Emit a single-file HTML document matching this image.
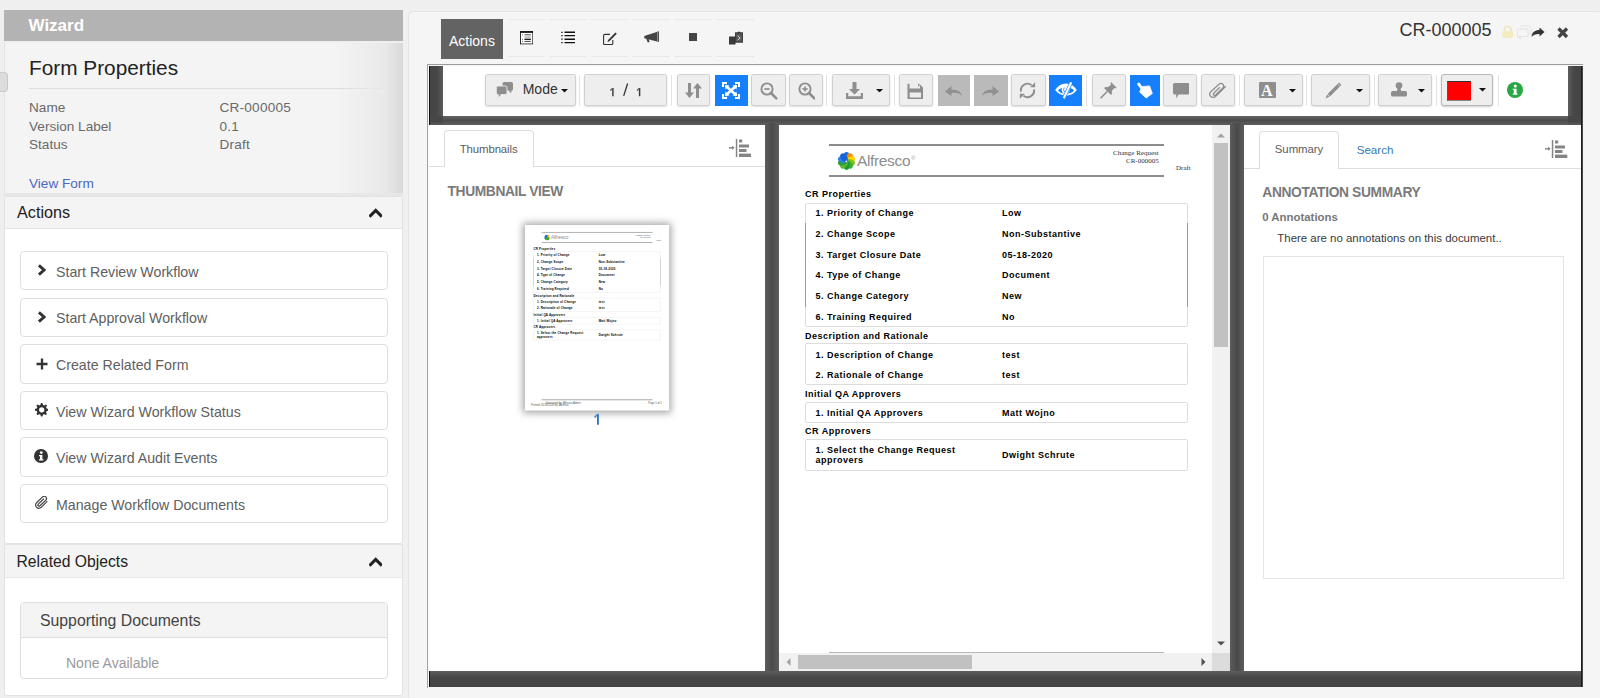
<!DOCTYPE html><html><head><meta charset="utf-8"><style>
*{margin:0;padding:0;box-sizing:border-box}
html,body{width:1600px;height:698px;overflow:hidden;background:#efefef;font-family:"Liberation Sans",sans-serif}
.r{position:absolute;display:block}
.t{position:absolute;line-height:1;white-space:nowrap}
</style></head><body><div class="r" style="left:4.00px;top:10.00px;width:399.00px;height:31.00px;background:#b3b3b3;"></div>
<div class="t" style="left:28.50px;top:17.01px;font-size:17.00px;color:#fff;font-weight:bold;">Wizard</div>
<div class="r" style="left:4.00px;top:43.00px;width:399.00px;height:149.80px;background:linear-gradient(to right,#f4f4f4 0,#f4f4f4 330px,#e9e9e9 380px,#d8d8d8 399px);border-left:1px solid #e3e3e3;"></div>
<div class="r" style="left:4.00px;top:192.80px;width:399.00px;height:3.40px;background:#e7e7e7;"></div>
<div class="r" style="left:0.00px;top:72.00px;width:8.00px;height:20.00px;background:#dcdcdc;border:1px solid #c8c8c8;border-left:none;border-radius:0 4px 4px 0;"></div>
<div class="t" style="left:29.00px;top:58.19px;font-size:20.80px;color:#222;">Form Properties</div>
<div class="r" style="left:29.00px;top:88.20px;width:361.00px;height:1.00px;background:linear-gradient(to right,#dedede 0,#dedede 320px,rgba(222,222,222,0) 361px);"></div>
<div class="t" style="left:29.00px;top:101.19px;font-size:13.60px;color:#6a6a6a;">Name</div>
<div class="t" style="left:219.40px;top:101.19px;font-size:13.60px;color:#6a6a6a;letter-spacing:0.25px;">CR-000005</div>
<div class="t" style="left:29.00px;top:120.09px;font-size:13.60px;color:#6a6a6a;">Version Label</div>
<div class="t" style="left:219.40px;top:120.09px;font-size:13.60px;color:#6a6a6a;letter-spacing:0.25px;">0.1</div>
<div class="t" style="left:29.00px;top:138.49px;font-size:13.60px;color:#6a6a6a;">Status</div>
<div class="t" style="left:219.40px;top:138.49px;font-size:13.60px;color:#6a6a6a;letter-spacing:0.25px;">Draft</div>
<div class="t" style="left:29.00px;top:176.69px;font-size:13.60px;color:#4b68c0;">View Form</div>
<div class="r" style="left:4.00px;top:196.00px;width:399.00px;height:347.60px;background:#fff;border:1px solid #e2e2e2;border-radius:3px;"></div>
<div class="r" style="left:5.00px;top:197.00px;width:397.00px;height:31.50px;background:#f4f4f4;border-bottom:1px solid #e6e6e6;border-radius:3px 3px 0 0;"></div>
<div class="t" style="left:17.00px;top:203.59px;font-size:16.20px;color:#222;">Actions</div>
<svg class="r" style="left:368.60px;top:206.60px;" width="13.40" height="11.00" viewBox="0 0 13.4 11"><path d="M1.6 8.6 L6.7 3.5 L11.8 8.6" fill="none" stroke="#222" stroke-width="3.1" stroke-linecap="square"/></svg>
<div class="r" style="left:20.00px;top:251.00px;width:367.50px;height:39.40px;border:1px solid #dedede;border-radius:4px;background:#fff;"></div>
<div class="t" style="left:56.00px;top:264.78px;font-size:14.20px;color:#606060;">Start Review Workflow</div>
<div class="r" style="left:20.00px;top:297.60px;width:367.50px;height:39.40px;border:1px solid #dedede;border-radius:4px;background:#fff;"></div>
<div class="t" style="left:56.00px;top:311.38px;font-size:14.20px;color:#606060;">Start Approval Workflow</div>
<div class="r" style="left:20.00px;top:344.20px;width:367.50px;height:39.40px;border:1px solid #dedede;border-radius:4px;background:#fff;"></div>
<div class="t" style="left:56.00px;top:357.98px;font-size:14.20px;color:#606060;">Create Related Form</div>
<div class="r" style="left:20.00px;top:390.80px;width:367.50px;height:39.40px;border:1px solid #dedede;border-radius:4px;background:#fff;"></div>
<div class="t" style="left:56.00px;top:404.58px;font-size:14.20px;color:#606060;">View Wizard Workflow Status</div>
<div class="r" style="left:20.00px;top:437.40px;width:367.50px;height:39.40px;border:1px solid #dedede;border-radius:4px;background:#fff;"></div>
<div class="t" style="left:56.00px;top:451.18px;font-size:14.20px;color:#606060;">View Wizard Audit Events</div>
<div class="r" style="left:20.00px;top:484.00px;width:367.50px;height:39.40px;border:1px solid #dedede;border-radius:4px;background:#fff;"></div>
<div class="t" style="left:56.00px;top:497.78px;font-size:14.20px;color:#606060;">Manage Workflow Documents</div>
<svg class="r" style="left:37.10px;top:264.20px;" width="9.00" height="12.00" viewBox="0 0 9 12"><path d="M1.9 1.4 L7.1 6 L1.9 10.6" fill="none" stroke="#333" stroke-width="2.9" stroke-linejoin="miter"/></svg>
<svg class="r" style="left:37.10px;top:310.80px;" width="9.00" height="12.00" viewBox="0 0 9 12"><path d="M1.9 1.4 L7.1 6 L1.9 10.6" fill="none" stroke="#333" stroke-width="2.9" stroke-linejoin="miter"/></svg>
<svg class="r" style="left:35.50px;top:357.80px;" width="12.00" height="12.00" viewBox="0 0 12 12"><path d="M6 0.5 V11.5 M0.5 6 H11.5" stroke="#333" stroke-width="2.3"/></svg>
<svg class="r" style="left:34.70px;top:403.00px;" width="13.40" height="13.60" viewBox="0 0 13.4 13.6"><path fill-rule="evenodd" fill="#333" d="M6.03,0.03 L7.37,0.03 L8.15,2.02 L9.06,2.39 L11.01,1.54 L11.96,2.49 L11.11,4.44 L11.48,5.35 L13.47,6.13 L13.47,7.47 L11.48,8.25 L11.11,9.16 L11.96,11.11 L11.01,12.06 L9.06,11.21 L8.15,11.58 L7.37,13.57 L6.03,13.57 L5.25,11.58 L4.34,11.21 L2.39,12.06 L1.44,11.11 L2.29,9.16 L1.92,8.25 L-0.07,7.47 L-0.07,6.13 L1.92,5.35 L2.29,4.44 L1.44,2.49 L2.39,1.54 L4.34,2.39 L5.25,2.02 Z M4.10,6.80 a2.60,2.60 0 1,0 5.20,0 a2.60,2.60 0 1,0 -5.20,0 Z"/></svg>
<svg class="r" style="left:34.30px;top:448.60px;" width="14.00" height="14.00" viewBox="0 0 14 14"><circle cx="7" cy="7" r="7" fill="#333"/><circle cx="7.3" cy="3.6" r="1.4" fill="#fff"/><path d="M5 6 H8.4 V10.3 H9.4 V11.5 H5 V10.3 H6 V7.2 H5 Z" fill="#fff"/></svg>
<svg class="r" style="left:34.50px;top:496.20px;" width="14.00" height="13.00" viewBox="0 0 14 13"><path d="M12.3 5.2 L6.2 11.3 C4.9 12.6 2.8 12.6 1.6 11.3 C0.3 10 0.3 7.9 1.6 6.7 L7.6 0.9 C8.5 0.0 9.9 0.0 10.8 0.9 C11.7 1.8 11.7 3.2 10.8 4.1 L5 9.8 C4.5 10.3 3.8 10.3 3.3 9.8 C2.8 9.3 2.8 8.6 3.3 8.1 L8.8 2.7" fill="none" stroke="#444" stroke-width="1.2"/></svg>
<div class="r" style="left:4.00px;top:543.80px;width:399.00px;height:152.70px;background:#fff;border:1px solid #e2e2e2;border-radius:1px 1px 3px 3px;"></div>
<div class="r" style="left:5.00px;top:544.80px;width:397.00px;height:33.70px;background:#f4f4f4;border-bottom:1px solid #e6e6e6;"></div>
<div class="t" style="left:16.40px;top:554.01px;font-size:15.70px;color:#222;">Related Objects</div>
<svg class="r" style="left:368.60px;top:555.60px;" width="13.40" height="11.00" viewBox="0 0 13.4 11"><path d="M1.6 8.6 L6.7 3.5 L11.8 8.6" fill="none" stroke="#222" stroke-width="3.1" stroke-linecap="square"/></svg>
<div class="r" style="left:20.00px;top:602.20px;width:367.50px;height:76.80px;border:1px solid #dedede;border-radius:4px;background:#fff;"></div>
<div class="r" style="left:21.00px;top:603.20px;width:365.50px;height:34.80px;background:#f4f4f4;border-bottom:1px solid #dedede;border-radius:3px 3px 0 0;"></div>
<div class="t" style="left:40.00px;top:613.43px;font-size:15.80px;color:#444;">Supporting Documents</div>
<div class="t" style="left:66.00px;top:655.85px;font-size:14.00px;color:#9a9a9a;">None Available</div>
<div class="r" style="left:403.00px;top:10.00px;width:5.00px;height:688.00px;background:#f0f0f0;"></div>
<div class="r" style="left:408.00px;top:10.50px;width:1196.00px;height:691.50px;background:#f5f5f5;border:1px solid #e4e4e4;border-radius:5px;"></div>
<div class="r" style="left:441.00px;top:19.00px;width:62.00px;height:39.50px;background:#636363;"></div>
<div class="t" style="left:449.00px;top:33.75px;font-size:14.00px;color:#fff;">Actions</div>
<div class="r" style="left:507.00px;top:19.00px;width:38.00px;height:37.50px;border-top:1px solid #e9e9e9;border-bottom:1px solid #e9e9e9;"></div>
<div class="r" style="left:548.80px;top:19.00px;width:38.00px;height:37.50px;border-top:1px solid #e9e9e9;border-bottom:1px solid #e9e9e9;"></div>
<div class="r" style="left:590.60px;top:19.00px;width:38.00px;height:37.50px;border-top:1px solid #e9e9e9;border-bottom:1px solid #e9e9e9;"></div>
<div class="r" style="left:632.40px;top:19.00px;width:38.00px;height:37.50px;border-top:1px solid #e9e9e9;border-bottom:1px solid #e9e9e9;"></div>
<div class="r" style="left:674.20px;top:19.00px;width:38.00px;height:37.50px;border-top:1px solid #e9e9e9;border-bottom:1px solid #e9e9e9;"></div>
<div class="r" style="left:716.00px;top:19.00px;width:38.00px;height:37.50px;border-top:1px solid #e9e9e9;border-bottom:1px solid #e9e9e9;"></div>
<svg class="r" style="left:519.70px;top:31.00px;" width="13.30" height="14.00" viewBox="0 0 13.3 14"><rect x="0.5" y="0.6" width="12.3" height="12.4" fill="#fff" stroke="#2a2a2a" stroke-width="1"/><rect x="0" y="0" width="13.3" height="1.9" fill="#1a1a1a"/><path d="M2.2 3.8 H3 M4.5 3.8 H10.8 M2.2 8.3 H3 M4.5 8.3 H10.8 M2.2 10.4 H3 M4.5 10.4 H10.8" stroke="#333" stroke-width="0.9"/><rect x="4.5" y="5" width="6.3" height="2.2" fill="#c8c8c8"/><path d="M4.5 8.3 H10.8" stroke="#111" stroke-width="1.1"/><rect x="0.5" y="13" width="12.3" height="0.8" fill="#bbb"/></svg>
<svg class="r" style="left:560.80px;top:31.00px;" width="14.50" height="12.50" viewBox="0 0 14.5 12.5"><path d="M0.2 1.3 H1.7 M0.2 4.6 H1.7 M0.2 8.2 H1.7 M0.2 11.6 H1.7" stroke="#222" stroke-width="1.3"/><path d="M3.5 1.3 H14.3 M3.5 4.6 H14.3 M3.5 8.2 H14.3 M3.5 11.6 H14.3" stroke="#111" stroke-width="1.4"/></svg>
<svg class="r" style="left:602.80px;top:31.60px;" width="14.00" height="13.00" viewBox="0 0 14 13"><path d="M7 2.4 H1.8 A1.2 1.2 0 0 0 0.6 3.6 V11.4 A1.2 1.2 0 0 0 1.8 12.6 H8.6 A1.2 1.2 0 0 0 9.8 11.4 V8" fill="none" stroke="#333" stroke-width="1.1"/><path d="M12.4 0.4 L13.8 1.8 L6.4 9.2 L4.4 10 L5.1 8 Z" fill="#333"/></svg>
<svg class="r" style="left:644.00px;top:31.20px;" width="15.00" height="12.00" viewBox="0 0 15 12"><path d="M0.3 5 L15 0.2 V11 L0.3 7.2 Z" fill="#444"/><path d="M2 6.8 L3.6 11.3 L5.6 11.3 L4.6 7.4 Z" fill="#444"/><path d="M13.6 0.6 V10.6" stroke="#999" stroke-width="1"/></svg>
<div class="r" style="left:689.40px;top:33.20px;width:7.90px;height:8.20px;background:#444;"></div>
<svg class="r" style="left:728.70px;top:30.60px;" width="14.00" height="14.00" viewBox="0 0 14 14"><rect x="0" y="5.5" width="6.5" height="8" fill="#3a3a3a"/><rect x="6.4" y="1.8" width="7.2" height="9.4" fill="#555" stroke="#333" stroke-width="0.9"/><path d="M8.2 2 L10 0.2 L11.8 2 Z" fill="#333"/><path d="M8.6 4.8 L11.2 7 L8.6 9.2" fill="none" stroke="#ddd" stroke-width="1"/></svg>
<div class="t" style="left:1399.40px;top:21.16px;font-size:18.00px;color:#333;">CR-000005</div>
<svg class="r" style="left:1502.00px;top:25.00px;" width="11.50" height="13.50" viewBox="0 0 11.5 13.5"><path d="M2.5 6 V4 A3.3 3.3 0 0 1 9 4 V6" fill="none" stroke="#ede6b8" stroke-width="1.6"/><rect x="0.5" y="6" width="10.5" height="7" rx="1" fill="#f3ecc0"/></svg>
<svg class="r" style="left:1516.50px;top:25.00px;" width="15.00" height="14.00" viewBox="0 0 15 14"><path d="M3 1 H12 A2 2 0 0 1 14 3 V7 A2 2 0 0 1 12 9 H11" fill="none" stroke="#e6e6e6" stroke-width="1.1"/><path d="M1.5 4 H9.5 A1.5 1.5 0 0 1 11 5.5 V10 A1.5 1.5 0 0 1 9.5 11.5 H4.5 L2.8 13.5 V11.5 H1.5 A1.5 1.5 0 0 1 0 10 V5.5 A1.5 1.5 0 0 1 1.5 4 Z" fill="none" stroke="#e2e2e2" stroke-width="1.1"/></svg>
<svg class="r" style="left:1531.00px;top:27.00px;" width="14.00" height="10.50" viewBox="0 0 14 10.5"><path d="M13.5 5 L8.5 0.5 V3 C4 3 1 5 0.5 10 C2.2 7.5 4.5 6.8 8.5 6.9 V9.5 Z" fill="#333"/></svg>
<svg class="r" style="left:1557.00px;top:27.00px;" width="11.50" height="11.50" viewBox="0 0 11.5 11.5"><path d="M1.5 1.5 L10 10 M10 1.5 L1.5 10" stroke="#444" stroke-width="3.3" stroke-linecap="butt"/></svg>
<div class="r" style="left:429.00px;top:65.50px;width:1153.50px;height:621.50px;background:#474747;"></div>
<div class="r" style="left:427.00px;top:64.20px;width:1155.50px;height:1.30px;background:#9c9c9c;"></div>
<div class="r" style="left:427.00px;top:64.20px;width:1.00px;height:623.80px;background:#a4a4a4;"></div>
<div class="r" style="left:428.00px;top:65.50px;width:1.00px;height:622.50px;background:#f8f8f8;"></div>
<div class="r" style="left:429.00px;top:65.50px;width:1.00px;height:621.50px;background:#111;"></div>
<div class="r" style="left:1581.30px;top:65.50px;width:1.20px;height:621.50px;background:#1c1c1c;"></div>
<div class="r" style="left:430.00px;top:65.50px;width:1151.20px;height:1.50px;background:linear-gradient(#333,#474747);"></div>
<div class="r" style="left:430.00px;top:65.50px;width:13.00px;height:50.50px;background:linear-gradient(to right,#444 0,#474747 55%,#5d5d5d 100%);"></div>
<div class="r" style="left:1568.00px;top:65.50px;width:13.30px;height:50.50px;background:linear-gradient(to right,#5d5d5d 0,#474747 45%,#444 100%);"></div>
<div class="r" style="left:443.00px;top:116.00px;width:1125.00px;height:9.00px;background:linear-gradient(to bottom,#646464 0,#4c4c4c 50%,#5f5f5f 100%);"></div>
<div class="r" style="left:430.00px;top:116.00px;width:13.00px;height:9.00px;background:linear-gradient(to bottom,#474747 0,#474747 60%,#5a5a5a 100%);"></div>
<div class="r" style="left:1568.00px;top:116.00px;width:13.30px;height:9.00px;background:linear-gradient(to bottom,#474747 0,#474747 60%,#5a5a5a 100%);"></div>
<div class="r" style="left:765.00px;top:123.00px;width:14.00px;height:548.00px;background:linear-gradient(to right,#5c5c5c 0,#4a4a4a 50%,#5c5c5c 100%);"></div>
<div class="r" style="left:1230.00px;top:123.00px;width:14.00px;height:548.00px;background:linear-gradient(to right,#5c5c5c 0,#4a4a4a 50%,#5c5c5c 100%);"></div>
<div class="r" style="left:430.00px;top:671.00px;width:1151.30px;height:16.00px;background:linear-gradient(to bottom,#5e5e5e 0,#474747 40%,#444 100%);"></div>
<div class="r" style="left:443.00px;top:65.60px;width:1125.00px;height:50.40px;background:#fff;"></div>
<div class="r" style="left:428.50px;top:125.00px;width:336.50px;height:546.00px;background:#fff;"></div>
<div class="r" style="left:779.00px;top:125.00px;width:451.00px;height:546.00px;background:#fff;"></div>
<div class="r" style="left:1244.00px;top:125.00px;width:337.00px;height:546.00px;background:#fff;"></div>
<div class="r" style="left:428.00px;top:64.20px;width:15.00px;height:1.30px;background:#9c9c9c;"></div>
<div class="r" style="left:484.50px;top:74.20px;width:91.00px;height:32.10px;background:#eeeeee;border:1px solid #d0d0d0;border-radius:2.5px;box-shadow:0 1px 2px rgba(0,0,0,0.13);"></div>
<svg class="r" style="left:496.00px;top:81.00px;" width="17.50" height="16.50" viewBox="0 0 17.5 16.5"><rect x="6.5" y="1" width="10.5" height="8.5" rx="1.6" fill="#8e8e8e"/><path d="M12.3 9.3 H15.6 L15.1 12.3 Z" fill="#8e8e8e"/><rect x="0.3" y="5" width="10.7" height="8.5" rx="1.6" fill="#8e8e8e" stroke="#eeeeee" stroke-width="0.9"/><path d="M2.4 13.3 H5.2 L2.9 16 Z" fill="#8e8e8e"/></svg>
<div class="t" style="left:522.70px;top:82.05px;font-size:14.00px;color:#333;">Mode</div>
<svg class="r" style="left:560.50px;top:89.00px;" width="7.00" height="3.60" viewBox="0 0 7 3.6"><path d="M0 0 H7 L3.5 3.5 Z" fill="#111"/></svg>
<div class="r" style="left:579.00px;top:75.00px;width:1.00px;height:30.50px;background:#e3e3e3;"></div>
<div class="r" style="left:584.00px;top:74.20px;width:83.00px;height:32.10px;background:#eeeeee;border:1px solid #d0d0d0;border-radius:2.5px;box-shadow:0 1px 2px rgba(0,0,0,0.13);"></div>
<svg class="r" style="left:600.00px;top:78.00px;" width="50.00" height="24.00" viewBox="0 0 50 24"><path d="M12.9 9.9 V18.3 M39.6 9.9 V18.3" fill="none" stroke="#3a3a3a" stroke-width="1.45"/><path d="M10.3 12.5 L12.8 10.1 M37 12.5 L39.5 10.1" fill="none" stroke="#555" stroke-width="1.1"/><path d="M27.6 5.5 L23.7 17.9" stroke="#333" stroke-width="1.3"/></svg>
<div class="r" style="left:671.00px;top:75.00px;width:1.00px;height:30.50px;background:#e3e3e3;"></div>
<div class="r" style="left:676.50px;top:74.20px;width:33.50px;height:32.10px;background:#eeeeee;border:1px solid #d0d0d0;border-radius:2.5px;box-shadow:0 1px 2px rgba(0,0,0,0.13);"></div>
<svg class="r" style="left:685.00px;top:83.00px;" width="17.00" height="15.00" viewBox="0 0 17 15"><path d="M3 0 H6 V9.5 H9 L4.5 15 L0 9.5 H3 Z" fill="#8e8e8e"/><path d="M11 15 H14 V5.5 H17 L12.5 0 L8 5.5 H11 Z" fill="#8e8e8e"/></svg>
<div class="r" style="left:715.00px;top:75.00px;width:32.50px;height:30.50px;background:#167ffc;"></div>
<svg class="r" style="left:722.00px;top:81.50px;" width="18.00" height="17.00" viewBox="0 0 18 17"><g fill="none" stroke="#fff" stroke-width="2"><path d="M1 5 V1 H5 M13 1 H17 V5 M17 12 V16 H13 M5 16 H1 V12"/></g><path d="M3.5 3.5 L14.5 13.5 M14.5 3.5 L3.5 13.5" stroke="#fff" stroke-width="2.4"/><path d="M3 3 L7.5 3.6 L3.6 7.5 Z M15 3 L10.5 3.6 L14.4 7.5 Z M15 14 L10.5 13.4 L14.4 9.5 Z M3 14 L7.5 13.4 L3.6 9.5 Z" fill="#fff"/></svg>
<div class="r" style="left:751.00px;top:74.20px;width:34.50px;height:32.10px;background:#eeeeee;border:1px solid #d0d0d0;border-radius:2.5px;box-shadow:0 1px 2px rgba(0,0,0,0.13);"></div>
<svg class="r" style="left:760.00px;top:82.00px;" width="17.50" height="17.50" viewBox="0 0 17.5 17.5"><circle cx="7" cy="7" r="5.6" fill="none" stroke="#8e8e8e" stroke-width="1.9"/><path d="M11 11 L16.3 16.3" stroke="#8e8e8e" stroke-width="2.6" stroke-linecap="round"/><path d="M4.4 7 H9.6" stroke="#8e8e8e" stroke-width="1.7"/></svg>
<div class="r" style="left:788.50px;top:74.20px;width:34.50px;height:32.10px;background:#eeeeee;border:1px solid #d0d0d0;border-radius:2.5px;box-shadow:0 1px 2px rgba(0,0,0,0.13);"></div>
<svg class="r" style="left:797.50px;top:82.00px;" width="17.50" height="17.50" viewBox="0 0 17.5 17.5"><circle cx="7" cy="7" r="5.6" fill="none" stroke="#8e8e8e" stroke-width="1.9"/><path d="M11 11 L16.3 16.3" stroke="#8e8e8e" stroke-width="2.6" stroke-linecap="round"/><path d="M4.4 7 H9.6" stroke="#8e8e8e" stroke-width="1.7"/><path d="M7 4.4 V9.6" stroke="#8e8e8e" stroke-width="1.7"/></svg>
<div class="r" style="left:826.00px;top:75.00px;width:1.00px;height:30.50px;background:#e3e3e3;"></div>
<div class="r" style="left:831.50px;top:74.20px;width:58.50px;height:32.10px;background:#eeeeee;border:1px solid #d0d0d0;border-radius:2.5px;box-shadow:0 1px 2px rgba(0,0,0,0.13);"></div>
<svg class="r" style="left:845.50px;top:82.00px;" width="17.00" height="17.00" viewBox="0 0 17 17"><path d="M6.5 0 H10.5 V7 H14 L8.5 12.5 L3 7 H6.5 Z" fill="#8e8e8e"/><path d="M0 11 H2.2 V14.2 H14.8 V11 H17 V17 H0 Z" fill="#8e8e8e"/></svg>
<svg class="r" style="left:876.00px;top:88.50px;" width="7.00" height="3.60" viewBox="0 0 7 3.6"><path d="M0 0 H7 L3.5 3.5 Z" fill="#111"/></svg>
<div class="r" style="left:894.00px;top:75.00px;width:1.00px;height:30.50px;background:#e3e3e3;"></div>
<div class="r" style="left:899.00px;top:74.20px;width:34.00px;height:32.10px;background:#eeeeee;border:1px solid #d0d0d0;border-radius:2.5px;box-shadow:0 1px 2px rgba(0,0,0,0.13);"></div>
<svg class="r" style="left:907.00px;top:82.50px;" width="16.50" height="16.50" viewBox="0 0 16.5 16.5"><path d="M0.5 0.8 H2.5 V5.5 H13 V1.5 L16 4.5 V16 H0.5 Z M2.7 9.5 V14.5 H14 V9.5 Z" fill="#8e8e8e" fill-rule="evenodd"/><rect x="11" y="0.8" width="1.5" height="2.5" fill="#8e8e8e"/></svg>
<div class="r" style="left:937.50px;top:75.00px;width:32.50px;height:30.50px;background:#bababa;"></div>
<svg class="r" style="left:944.50px;top:86.00px;" width="17.00" height="10.00" viewBox="0 0 17 10"><path d="M6.5 0 L0 5.5 L6.5 10 V7 C10.5 6.5 14 6.8 17 9.5 C15.5 5 11 3.5 6.5 3.8 Z" fill="#8f8f8f"/></svg>
<div class="r" style="left:974.00px;top:75.00px;width:33.50px;height:30.50px;background:#bababa;"></div>
<svg class="r" style="left:982.00px;top:86.00px;" width="17.00" height="10.00" viewBox="0 0 17 10"><path d="M10.5 0 L17 5.5 L10.5 10 V7 C6.5 6.5 3 6.8 0 9.5 C1.5 5 6 3.5 10.5 3.8 Z" fill="#8f8f8f"/></svg>
<div class="r" style="left:1011.00px;top:74.20px;width:35.00px;height:32.10px;background:#eeeeee;border:1px solid #d0d0d0;border-radius:2.5px;box-shadow:0 1px 2px rgba(0,0,0,0.13);"></div>
<svg class="r" style="left:1019.30px;top:82.00px;" width="17.00" height="17.00" viewBox="0 0 17 17"><path d="M2.0 9.65 A6.6 6.6 0 0 1 12.6 3.2" fill="none" stroke="#8e8e8e" stroke-width="1.9"/><path d="M15.0 7.35 A6.6 6.6 0 0 1 4.5 13.8" fill="none" stroke="#8e8e8e" stroke-width="1.9"/><path d="M16.1 0.2 V5.2 H11.1 Z" fill="#8e8e8e"/><path d="M0.9 16.8 V11.8 H5.9 Z" fill="#8e8e8e"/></svg>
<div class="r" style="left:1049.00px;top:75.00px;width:32.50px;height:30.50px;background:#167ffc;"></div>
<svg class="r" style="left:1055.00px;top:82.30px;" width="22.00" height="17.00" viewBox="0 0 22 17"><path d="M0.2 8 C5.5 -0.6 16.5 -0.6 21.8 8 C16.5 15.5 5.5 15.5 0.2 8 Z" fill="#fff"/><path d="M3.0 8.6 C5.5 4.6 16.5 4.6 19.0 8.6 C16 12.9 6 12.9 3.0 8.6 Z" fill="#167ffc"/><circle cx="10.6" cy="7.7" r="3.9" fill="#fff"/><path d="M9.6 5.6 C8.4 6.6 8.4 8.8 9.6 10" fill="none" stroke="#167ffc" stroke-width="0.9"/><path d="M16.2 0.3 L8.8 16.3" stroke="#167ffc" stroke-width="3.4"/><path d="M16.2 0.3 L8.8 16.3" stroke="#fff" stroke-width="2.1"/></svg>
<div class="r" style="left:1086.00px;top:75.00px;width:1.00px;height:30.50px;background:#e3e3e3;"></div>
<div class="r" style="left:1092.00px;top:74.20px;width:34.00px;height:32.10px;background:#eeeeee;border:1px solid #d0d0d0;border-radius:2.5px;box-shadow:0 1px 2px rgba(0,0,0,0.13);"></div>
<svg class="r" style="left:1100.00px;top:82.00px;" width="17.00" height="17.00" viewBox="0 0 17 17"><path d="M11 0 L16.5 5.5 L15.5 6.5 L14.3 6 L11.7 9.2 C12.3 10.6 12 12 11 13 L4 6 C5 5 6.4 4.7 7.8 5.3 L11 2.7 L10.5 1.5 Z" fill="#8e8e8e"/><path d="M7.2 9.5 L0.5 16.3" stroke="#8e8e8e" stroke-width="1.6"/></svg>
<div class="r" style="left:1130.00px;top:75.00px;width:29.90px;height:30.50px;background:#167ffc;"></div>
<svg class="r" style="left:1136.00px;top:82.00px;" width="18.00" height="18.00" viewBox="0 0 18 18"><path d="M2.7 2.1 L6 6.5" stroke="#fff" stroke-width="2.9" stroke-linecap="round"/><path d="M5.5 4.8 L13.6 3.9 L16.3 11.5 L10.2 16 L3.6 10 L5 7 Z" fill="#fff" stroke="#fff" stroke-width="0.8" stroke-linejoin="round"/></svg>
<div class="r" style="left:1163.20px;top:74.20px;width:34.00px;height:32.10px;background:#eeeeee;border:1px solid #d0d0d0;border-radius:2.5px;box-shadow:0 1px 2px rgba(0,0,0,0.13);"></div>
<svg class="r" style="left:1172.50px;top:83.00px;" width="16.50" height="15.50" viewBox="0 0 16.5 15.5"><path d="M1.5 0 H15 A1.5 1.5 0 0 1 16.5 1.5 V10 A1.5 1.5 0 0 1 15 11.5 H5.5 L3.2 15.5 L3.2 11.5 H1.5 A1.5 1.5 0 0 1 0 10 V1.5 A1.5 1.5 0 0 1 1.5 0 Z" fill="#8e8e8e"/></svg>
<div class="r" style="left:1201.00px;top:74.20px;width:34.00px;height:32.10px;background:#eeeeee;border:1px solid #d0d0d0;border-radius:2.5px;box-shadow:0 1px 2px rgba(0,0,0,0.13);"></div>
<svg class="r" style="left:1209.00px;top:81.50px;" width="18.00" height="17.00" viewBox="0 0 18 17"><path d="M16.5 2.8 L6.5 12.8 C5 14.3 2.8 14.3 1.5 13 C0.2 11.7 0.2 9.5 1.7 8 L9.7 0.8 C10.8 -0.2 12.5 -0.2 13.5 0.8 C14.5 1.8 14.5 3.5 13.5 4.5 L6.3 11.5 C5.7 12 4.9 12 4.4 11.5 C3.9 11 3.9 10.3 4.4 9.8 L10.5 3.7" fill="none" stroke="#8e8e8e" stroke-width="1.25" transform="translate(0.3 1.5)"/></svg>
<div class="r" style="left:1238.50px;top:75.00px;width:1.00px;height:30.50px;background:#e3e3e3;"></div>
<div class="r" style="left:1244.00px;top:74.20px;width:58.50px;height:32.10px;background:#eeeeee;border:1px solid #d0d0d0;border-radius:2.5px;box-shadow:0 1px 2px rgba(0,0,0,0.13);"></div>
<div class="r" style="left:1258.70px;top:82.00px;width:17.00px;height:16.00px;background:#8e8e8e;border-radius:1px;"></div>
<div class="t" style="left:1260.60px;top:81.95px;font-size:17.50px;color:#fff;font-weight:bold;font-family:'Liberation Serif', serif;transform:scaleX(0.92);transform-origin:0 0;">A</div>
<svg class="r" style="left:1288.50px;top:89.00px;" width="7.00" height="3.60" viewBox="0 0 7 3.6"><path d="M0 0 H7 L3.5 3.5 Z" fill="#111"/></svg>
<div class="r" style="left:1306.00px;top:75.00px;width:1.00px;height:30.50px;background:#e3e3e3;"></div>
<div class="r" style="left:1311.00px;top:74.20px;width:59.00px;height:32.10px;background:#eeeeee;border:1px solid #d0d0d0;border-radius:2.5px;box-shadow:0 1px 2px rgba(0,0,0,0.13);"></div>
<svg class="r" style="left:1325.00px;top:81.50px;" width="17.00" height="17.00" viewBox="0 0 17 17"><path d="M14 0.6 L16.4 3 L5 14.4 L2.6 12 Z" fill="#8e8e8e"/><path d="M2.2 12.6 L4.4 14.8 L0.4 16.6 Z" fill="#8e8e8e"/><path d="M12.6 2 L15 4.4" stroke="#eee" stroke-width="0.8"/></svg>
<svg class="r" style="left:1355.50px;top:88.50px;" width="7.00" height="3.60" viewBox="0 0 7 3.6"><path d="M0 0 H7 L3.5 3.5 Z" fill="#111"/></svg>
<div class="r" style="left:1374.00px;top:75.00px;width:1.00px;height:30.50px;background:#e3e3e3;"></div>
<div class="r" style="left:1378.00px;top:74.20px;width:54.00px;height:32.10px;background:#eeeeee;border:1px solid #d0d0d0;border-radius:2.5px;box-shadow:0 1px 2px rgba(0,0,0,0.13);"></div>
<svg class="r" style="left:1391.00px;top:82.00px;" width="16.00" height="14.50" viewBox="0 0 16 14.5"><circle cx="8" cy="3.5" r="3.3" fill="#8e8e8e"/><path d="M6.5 5.5 H9.5 L10 9 H14.5 A1.5 1.5 0 0 1 16 10.5 V13 A1.5 1.5 0 0 1 14.5 14.5 H1.5 A1.5 1.5 0 0 1 0 13 V10.5 A1.5 1.5 0 0 1 1.5 9 H6 Z" fill="#8e8e8e"/></svg>
<svg class="r" style="left:1418.00px;top:89.00px;" width="7.00" height="3.60" viewBox="0 0 7 3.6"><path d="M0 0 H7 L3.5 3.5 Z" fill="#111"/></svg>
<div class="r" style="left:1436.00px;top:75.00px;width:1.00px;height:30.50px;background:#e3e3e3;"></div>
<div class="r" style="left:1441.00px;top:74.20px;width:52.00px;height:32.10px;background:#eeeeee;border:1px solid #b8b8b8;border-radius:3px;box-shadow:0 1px 2px rgba(0,0,0,0.2);"></div>
<div class="r" style="left:1447.20px;top:81.00px;width:23.80px;height:19.50px;background:#ff0000;border-top:1px solid #333;border-left:1px solid #555;border-bottom:1.5px solid #888;"></div>
<svg class="r" style="left:1478.50px;top:88.00px;" width="7.00" height="3.60" viewBox="0 0 7 3.6"><path d="M0 0 H7 L3.5 3.5 Z" fill="#111"/></svg>
<div class="r" style="left:1498.00px;top:75.00px;width:1.00px;height:30.50px;background:#e3e3e3;"></div>
<svg class="r" style="left:1506.50px;top:82.00px;" width="16.00" height="16.00" viewBox="0 0 16 16"><circle cx="8" cy="8" r="8" fill="#28a745"/><circle cx="8.3" cy="4" r="1.5" fill="#fff"/><path d="M5.8 6.8 H9.6 V11.5 H10.6 V12.8 H5.8 V11.5 H6.8 V8.1 H5.8 Z" fill="#fff"/></svg>
<div class="r" style="left:428.50px;top:166.00px;width:336.50px;height:1.00px;background:#dddddd;"></div>
<div class="r" style="left:443.50px;top:130.00px;width:90.30px;height:37.00px;background:#fff;border:1px solid #dddddd;border-bottom:none;border-radius:4px 4px 0 0;"></div>
<div class="t" style="left:459.70px;top:143.65px;font-size:11.40px;color:#5c5c5c;letter-spacing:-0.1px;">Thumbnails</div>
<svg class="r" style="left:728.50px;top:138.70px;" width="22.50" height="18.50" viewBox="0 0 22.5 18.5"><path d="M0 8.8 H4" stroke="#858585" stroke-width="1.5"/><path d="M3.3 6.6 L5.6 8.8 L3.3 11 Z" fill="#858585"/><rect x="6.8" y="0" width="1.5" height="18.5" fill="#858585"/><rect x="10" y="0.5" width="3.2" height="3" fill="#858585"/><rect x="10" y="5.5" width="10" height="3" fill="#858585"/><rect x="10" y="10" width="7.5" height="3" fill="#858585"/><rect x="10" y="14.6" width="12.3" height="3.4" fill="#858585"/></svg>
<div class="t" style="left:447.60px;top:184.52px;font-size:13.80px;color:#7a7a7a;font-weight:bold;letter-spacing:-0.4px;">THUMBNAIL VIEW</div>
<div class="r" style="left:1244.00px;top:167.60px;width:337.00px;height:1.00px;background:#dddddd;"></div>
<div class="r" style="left:1259.10px;top:131.20px;width:79.70px;height:37.40px;background:#fff;border:1px solid #dddddd;border-bottom:none;border-radius:4px 4px 0 0;"></div>
<div class="t" style="left:1274.80px;top:144.35px;font-size:11.40px;color:#5c5c5c;letter-spacing:-0.05px;">Summary</div>
<div class="t" style="left:1356.70px;top:143.88px;font-size:11.60px;color:#337ab7;">Search</div>
<svg class="r" style="left:1545.00px;top:139.50px;" width="22.50" height="18.50" viewBox="0 0 22.5 18.5"><path d="M0 8.8 H4" stroke="#858585" stroke-width="1.5"/><path d="M3.3 6.6 L5.6 8.8 L3.3 11 Z" fill="#858585"/><rect x="6.8" y="0" width="1.5" height="18.5" fill="#858585"/><rect x="10" y="0.5" width="3.2" height="3" fill="#858585"/><rect x="10" y="5.5" width="10" height="3" fill="#858585"/><rect x="10" y="10" width="7.5" height="3" fill="#858585"/><rect x="10" y="14.6" width="12.3" height="3.4" fill="#858585"/></svg>
<div class="t" style="left:1262.30px;top:186.42px;font-size:13.80px;color:#7a7a7a;font-weight:bold;letter-spacing:-0.36px;">ANNOTATION SUMMARY</div>
<div class="t" style="left:1262.30px;top:212.05px;font-size:11.40px;color:#777;font-weight:bold;">0 Annotations</div>
<div class="t" style="left:1277.30px;top:232.51px;font-size:11.45px;color:#3a3a3a;">There are no annotations on this document..</div>
<div class="r" style="left:1262.50px;top:256.40px;width:301.00px;height:323.10px;border:1px solid #e4e4e4;"></div>
<div class="r" style="left:779px;top:125px;width:433px;height:528px;overflow:hidden;background:#fff;">
<div class="r" style="left:0.5px;top:-2px;width:434.6px;height:566px;"><div class="r" style="left:49.50px;top:21.20px;width:335.00px;height:1.50px;background:#8c8c8c;"></div><div class="r" style="left:49.50px;top:52.30px;width:335.00px;height:1.50px;background:#8c8c8c;"></div><svg class="r" style="left:58.20px;top:28.50px;" width="17.00" height="18.00" viewBox="0 0 17 18"><ellipse cx="8.50" cy="4.70" rx="3.1" ry="4.6" fill="#1f6fe0" transform="rotate(0.0 8.50 9.00)"/><ellipse cx="8.50" cy="4.70" rx="3.1" ry="4.6" fill="#ff8a00" transform="rotate(36.0 8.50 9.00)"/><ellipse cx="8.50" cy="4.70" rx="3.1" ry="4.6" fill="#ffd200" transform="rotate(72.0 8.50 9.00)"/><ellipse cx="8.50" cy="4.70" rx="3.1" ry="4.6" fill="#86c21c" transform="rotate(108.0 8.50 9.00)"/><ellipse cx="8.50" cy="4.70" rx="3.1" ry="4.6" fill="#3dae2b" transform="rotate(144.0 8.50 9.00)"/><ellipse cx="8.50" cy="4.70" rx="3.1" ry="4.6" fill="#169a3a" transform="rotate(180.0 8.50 9.00)"/><ellipse cx="8.50" cy="4.70" rx="3.1" ry="4.6" fill="#5fb82a" transform="rotate(216.0 8.50 9.00)"/><ellipse cx="8.50" cy="4.70" rx="3.1" ry="4.6" fill="#2e9e3e" transform="rotate(252.0 8.50 9.00)"/><ellipse cx="8.50" cy="4.70" rx="3.1" ry="4.6" fill="#2f7fe6" transform="rotate(288.0 8.50 9.00)"/><ellipse cx="8.50" cy="4.70" rx="3.1" ry="4.6" fill="#1a63d6" transform="rotate(324.0 8.50 9.00)"/><circle cx="8.3" cy="9.3" r="0.9" fill="#e8f4e8"/></svg><div class="t" style="left:77.50px;top:30.38px;font-size:15.50px;color:#8d8d8d;letter-spacing:-0.35px;">Alfresco</div><div class="t" style="left:131.50px;top:31.92px;font-size:6.00px;color:#aaa;">&reg;</div><div class="t" style="right:55.40px;top:27.34px;font-size:7.00px;color:#333;font-family:'Liberation Serif', serif;">Change Request</div><div class="t" style="right:55.40px;top:34.84px;font-size:7.00px;color:#333;font-family:'Liberation Serif', serif;">CR-000005</div><div class="t" style="left:396.50px;top:41.94px;font-size:7.00px;color:#333;font-family:'Liberation Serif', serif;">Draft</div><div class="t" style="left:25.50px;top:66.98px;font-size:9.00px;color:#000;font-weight:bold;letter-spacing:0.5px;">CR Properties</div><div class="r" style="left:25.20px;top:79.50px;width:383.70px;height:124.60px;border:1px solid #dddddd;border-radius:2px;"></div><div class="r" style="left:25.20px;top:100.00px;width:1.20px;height:84.00px;background:#9a9a9a;"></div><div class="r" style="left:407.70px;top:100.00px;width:1.20px;height:84.00px;background:#9a9a9a;"></div><div class="t" style="left:35.90px;top:86.08px;font-size:9.00px;color:#000;font-weight:bold;letter-spacing:0.5px;">1. Priority of Change</div><div class="t" style="left:222.50px;top:86.08px;font-size:9.00px;color:#000;font-weight:bold;letter-spacing:0.5px;">Low</div><div class="t" style="left:35.90px;top:106.88px;font-size:9.00px;color:#000;font-weight:bold;letter-spacing:0.5px;">2. Change Scope</div><div class="t" style="left:222.50px;top:106.88px;font-size:9.00px;color:#000;font-weight:bold;letter-spacing:0.5px;">Non-Substantive</div><div class="t" style="left:35.90px;top:127.68px;font-size:9.00px;color:#000;font-weight:bold;letter-spacing:0.5px;">3. Target Closure Date</div><div class="t" style="left:222.50px;top:127.68px;font-size:9.00px;color:#000;font-weight:bold;letter-spacing:0.5px;">05-18-2020</div><div class="t" style="left:35.90px;top:148.48px;font-size:9.00px;color:#000;font-weight:bold;letter-spacing:0.5px;">4. Type of Change</div><div class="t" style="left:222.50px;top:148.48px;font-size:9.00px;color:#000;font-weight:bold;letter-spacing:0.5px;">Document</div><div class="t" style="left:35.90px;top:169.28px;font-size:9.00px;color:#000;font-weight:bold;letter-spacing:0.5px;">5. Change Category</div><div class="t" style="left:222.50px;top:169.28px;font-size:9.00px;color:#000;font-weight:bold;letter-spacing:0.5px;">New</div><div class="t" style="left:35.90px;top:190.08px;font-size:9.00px;color:#000;font-weight:bold;letter-spacing:0.5px;">6. Training Required</div><div class="t" style="left:222.50px;top:190.08px;font-size:9.00px;color:#000;font-weight:bold;letter-spacing:0.5px;">No</div><div class="t" style="left:25.50px;top:208.68px;font-size:9.00px;color:#000;font-weight:bold;letter-spacing:0.5px;">Description and Rationale</div><div class="r" style="left:25.20px;top:220.30px;width:383.70px;height:42.10px;border:1px solid #dddddd;border-radius:2px;"></div><div class="t" style="left:35.90px;top:227.58px;font-size:9.00px;color:#000;font-weight:bold;letter-spacing:0.5px;">1. Description of Change</div><div class="t" style="left:222.50px;top:227.58px;font-size:9.00px;color:#000;font-weight:bold;letter-spacing:0.5px;">test</div><div class="t" style="left:35.90px;top:248.38px;font-size:9.00px;color:#000;font-weight:bold;letter-spacing:0.5px;">2. Rationale of Change</div><div class="t" style="left:222.50px;top:248.38px;font-size:9.00px;color:#000;font-weight:bold;letter-spacing:0.5px;">test</div><div class="t" style="left:25.50px;top:267.08px;font-size:9.00px;color:#000;font-weight:bold;letter-spacing:0.5px;">Initial QA Approvers</div><div class="r" style="left:25.20px;top:278.60px;width:383.70px;height:21.90px;border:1px solid #dddddd;border-radius:2px;"></div><div class="t" style="left:35.90px;top:285.58px;font-size:9.00px;color:#000;font-weight:bold;letter-spacing:0.5px;">1. Initial QA Approvers</div><div class="t" style="left:222.50px;top:285.58px;font-size:9.00px;color:#000;font-weight:bold;letter-spacing:0.5px;">Matt Wojno</div><div class="t" style="left:25.50px;top:304.28px;font-size:9.00px;color:#000;font-weight:bold;letter-spacing:0.5px;">CR Approvers</div><div class="r" style="left:25.20px;top:316.00px;width:383.70px;height:31.70px;border:1px solid #dddddd;border-radius:2px;"></div><div class="t" style="left:35.90px;top:322.98px;font-size:9.00px;color:#000;font-weight:bold;letter-spacing:0.5px;">1. Select the Change Request</div><div class="t" style="left:35.90px;top:333.28px;font-size:9.00px;color:#000;font-weight:bold;letter-spacing:0.5px;">approvers</div><div class="t" style="left:222.50px;top:328.08px;font-size:9.00px;color:#000;font-weight:bold;letter-spacing:0.5px;">Dwight Schrute</div><div class="r" style="left:49.50px;top:528.50px;width:335.00px;height:1.00px;background:#b5b5b5;"></div></div>
</div>
<div class="r" style="left:1212.00px;top:125.00px;width:18.00px;height:528.00px;background:#f1f1f1;"></div>
<svg class="r" style="left:1217.00px;top:132.50px;" width="8.00" height="5.00" viewBox="0 0 8 5"><path d="M0 4.5 H8 L4 0.5 Z" fill="#a3a3a3"/></svg>
<div class="r" style="left:1214.00px;top:143.20px;width:14.00px;height:203.80px;background:#c1c1c1;"></div>
<svg class="r" style="left:1217.00px;top:640.50px;" width="8.00" height="5.00" viewBox="0 0 8 5"><path d="M0 0.5 H8 L4 4.5 Z" fill="#505050"/></svg>
<div class="r" style="left:779.00px;top:653.00px;width:433.00px;height:18.00px;background:#f1f1f1;"></div>
<svg class="r" style="left:785.50px;top:658.00px;" width="5.00" height="8.00" viewBox="0 0 5 8"><path d="M4.5 0 V8 L0.5 4 Z" fill="#a3a3a3"/></svg>
<div class="r" style="left:798.00px;top:654.60px;width:174.00px;height:14.20px;background:#c1c1c1;"></div>
<svg class="r" style="left:1200.50px;top:658.00px;" width="5.00" height="8.00" viewBox="0 0 5 8"><path d="M0.5 0 V8 L4.5 4 Z" fill="#505050"/></svg>
<div class="r" style="left:1212.00px;top:653.00px;width:18.00px;height:18.00px;background:#dcdcdc;"></div>
<div class="r" style="left:525.1px;top:224.8px;width:434.6px;height:559.5px;transform:scale(0.3313);transform-origin:0 0;background:#fff;box-shadow:0 0 22px 7px rgba(0,0,0,0.36);"><div class="r" style="left:49.50px;top:21.20px;width:335.00px;height:1.50px;background:#8c8c8c;"></div><div class="r" style="left:49.50px;top:52.30px;width:335.00px;height:1.50px;background:#8c8c8c;"></div><svg class="r" style="left:58.20px;top:28.50px;" width="17.00" height="18.00" viewBox="0 0 17 18"><ellipse cx="8.50" cy="4.70" rx="3.1" ry="4.6" fill="#1f6fe0" transform="rotate(0.0 8.50 9.00)"/><ellipse cx="8.50" cy="4.70" rx="3.1" ry="4.6" fill="#ff8a00" transform="rotate(36.0 8.50 9.00)"/><ellipse cx="8.50" cy="4.70" rx="3.1" ry="4.6" fill="#ffd200" transform="rotate(72.0 8.50 9.00)"/><ellipse cx="8.50" cy="4.70" rx="3.1" ry="4.6" fill="#86c21c" transform="rotate(108.0 8.50 9.00)"/><ellipse cx="8.50" cy="4.70" rx="3.1" ry="4.6" fill="#3dae2b" transform="rotate(144.0 8.50 9.00)"/><ellipse cx="8.50" cy="4.70" rx="3.1" ry="4.6" fill="#169a3a" transform="rotate(180.0 8.50 9.00)"/><ellipse cx="8.50" cy="4.70" rx="3.1" ry="4.6" fill="#5fb82a" transform="rotate(216.0 8.50 9.00)"/><ellipse cx="8.50" cy="4.70" rx="3.1" ry="4.6" fill="#2e9e3e" transform="rotate(252.0 8.50 9.00)"/><ellipse cx="8.50" cy="4.70" rx="3.1" ry="4.6" fill="#2f7fe6" transform="rotate(288.0 8.50 9.00)"/><ellipse cx="8.50" cy="4.70" rx="3.1" ry="4.6" fill="#1a63d6" transform="rotate(324.0 8.50 9.00)"/><circle cx="8.3" cy="9.3" r="0.9" fill="#e8f4e8"/></svg><div class="t" style="left:77.50px;top:30.38px;font-size:15.50px;color:#8d8d8d;letter-spacing:-0.35px;">Alfresco</div><div class="t" style="left:131.50px;top:31.92px;font-size:6.00px;color:#aaa;">&reg;</div><div class="t" style="right:55.40px;top:27.34px;font-size:7.00px;color:#333;font-family:'Liberation Serif', serif;">Change Request</div><div class="t" style="right:55.40px;top:34.84px;font-size:7.00px;color:#333;font-family:'Liberation Serif', serif;">CR-000005</div><div class="t" style="left:396.50px;top:41.94px;font-size:7.00px;color:#333;font-family:'Liberation Serif', serif;">Draft</div><div class="t" style="left:25.50px;top:66.98px;font-size:9.00px;color:#000;font-weight:bold;letter-spacing:0.5px;">CR Properties</div><div class="r" style="left:25.20px;top:79.50px;width:383.70px;height:124.60px;border:1px solid #dddddd;border-radius:2px;"></div><div class="r" style="left:25.20px;top:100.00px;width:1.20px;height:84.00px;background:#9a9a9a;"></div><div class="r" style="left:407.70px;top:100.00px;width:1.20px;height:84.00px;background:#9a9a9a;"></div><div class="t" style="left:35.90px;top:86.08px;font-size:9.00px;color:#000;font-weight:bold;letter-spacing:0.5px;">1. Priority of Change</div><div class="t" style="left:222.50px;top:86.08px;font-size:9.00px;color:#000;font-weight:bold;letter-spacing:0.5px;">Low</div><div class="t" style="left:35.90px;top:106.88px;font-size:9.00px;color:#000;font-weight:bold;letter-spacing:0.5px;">2. Change Scope</div><div class="t" style="left:222.50px;top:106.88px;font-size:9.00px;color:#000;font-weight:bold;letter-spacing:0.5px;">Non-Substantive</div><div class="t" style="left:35.90px;top:127.68px;font-size:9.00px;color:#000;font-weight:bold;letter-spacing:0.5px;">3. Target Closure Date</div><div class="t" style="left:222.50px;top:127.68px;font-size:9.00px;color:#000;font-weight:bold;letter-spacing:0.5px;">05-18-2020</div><div class="t" style="left:35.90px;top:148.48px;font-size:9.00px;color:#000;font-weight:bold;letter-spacing:0.5px;">4. Type of Change</div><div class="t" style="left:222.50px;top:148.48px;font-size:9.00px;color:#000;font-weight:bold;letter-spacing:0.5px;">Document</div><div class="t" style="left:35.90px;top:169.28px;font-size:9.00px;color:#000;font-weight:bold;letter-spacing:0.5px;">5. Change Category</div><div class="t" style="left:222.50px;top:169.28px;font-size:9.00px;color:#000;font-weight:bold;letter-spacing:0.5px;">New</div><div class="t" style="left:35.90px;top:190.08px;font-size:9.00px;color:#000;font-weight:bold;letter-spacing:0.5px;">6. Training Required</div><div class="t" style="left:222.50px;top:190.08px;font-size:9.00px;color:#000;font-weight:bold;letter-spacing:0.5px;">No</div><div class="t" style="left:25.50px;top:208.68px;font-size:9.00px;color:#000;font-weight:bold;letter-spacing:0.5px;">Description and Rationale</div><div class="r" style="left:25.20px;top:220.30px;width:383.70px;height:42.10px;border:1px solid #dddddd;border-radius:2px;"></div><div class="t" style="left:35.90px;top:227.58px;font-size:9.00px;color:#000;font-weight:bold;letter-spacing:0.5px;">1. Description of Change</div><div class="t" style="left:222.50px;top:227.58px;font-size:9.00px;color:#000;font-weight:bold;letter-spacing:0.5px;">test</div><div class="t" style="left:35.90px;top:248.38px;font-size:9.00px;color:#000;font-weight:bold;letter-spacing:0.5px;">2. Rationale of Change</div><div class="t" style="left:222.50px;top:248.38px;font-size:9.00px;color:#000;font-weight:bold;letter-spacing:0.5px;">test</div><div class="t" style="left:25.50px;top:267.08px;font-size:9.00px;color:#000;font-weight:bold;letter-spacing:0.5px;">Initial QA Approvers</div><div class="r" style="left:25.20px;top:278.60px;width:383.70px;height:21.90px;border:1px solid #dddddd;border-radius:2px;"></div><div class="t" style="left:35.90px;top:285.58px;font-size:9.00px;color:#000;font-weight:bold;letter-spacing:0.5px;">1. Initial QA Approvers</div><div class="t" style="left:222.50px;top:285.58px;font-size:9.00px;color:#000;font-weight:bold;letter-spacing:0.5px;">Matt Wojno</div><div class="t" style="left:25.50px;top:304.28px;font-size:9.00px;color:#000;font-weight:bold;letter-spacing:0.5px;">CR Approvers</div><div class="r" style="left:25.20px;top:316.00px;width:383.70px;height:31.70px;border:1px solid #dddddd;border-radius:2px;"></div><div class="t" style="left:35.90px;top:322.98px;font-size:9.00px;color:#000;font-weight:bold;letter-spacing:0.5px;">1. Select the Change Request</div><div class="t" style="left:35.90px;top:333.28px;font-size:9.00px;color:#000;font-weight:bold;letter-spacing:0.5px;">approvers</div><div class="t" style="left:222.50px;top:328.08px;font-size:9.00px;color:#000;font-weight:bold;letter-spacing:0.5px;">Dwight Schrute</div><div class="r" style="left:49.50px;top:526.00px;width:335.00px;height:3.00px;background:#a8a8a8;"></div><div class="t" style="left:62.00px;top:533.23px;font-size:8.00px;color:#555;">Generated by: Alfresco Admin</div><div class="t" style="left:18.00px;top:539.23px;font-size:8.00px;color:#555;">Printed: 05/18/2020 by: Alfresco</div><div class="t" style="left:372.00px;top:534.23px;font-size:8.00px;color:#555;">Page 1 of 1</div></div>
<svg class="r" style="left:590.00px;top:410.00px;" width="14.00" height="18.00" viewBox="0 0 14 18"><path d="M7.9 3.9 V14.7" fill="none" stroke="#2a6fc0" stroke-width="1.85"/><path d="M4.6 7.4 L7.7 4.3" fill="none" stroke="#4a86cc" stroke-width="1.5"/></svg></body></html>
